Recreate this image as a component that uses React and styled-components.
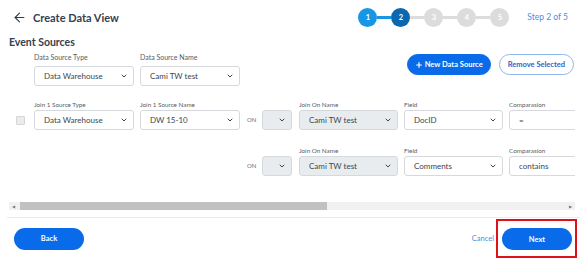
import React from 'react'
import styled, { createGlobalStyle } from 'styled-components'
import { ArrowLeft, ChevronDown, Plus } from 'lucide-react'

const GlobalStyle = createGlobalStyle`
  html, body { margin: 0; padding: 0; background: #fff; }
  body { font-family: Lato, "Noto Sans", sans-serif; }
`

const Page = styled.div`
  width: 588px;
  height: 271px;
  overflow: hidden;
  background: #fff;
  color: #2e3d4c;
`

const Header = styled.div`
  display: flex;
  align-items: center;
  height: 34px;
  padding: 0 20px 0 12px;
`

const Title = styled.h1`
  margin: 0 0 0 6px;
  font-size: 11px;
  font-weight: 700;
  color: #34414f;
`

const Stepper = styled.div`
  margin-left: auto;
  display: flex;
  align-items: center;
`

const Step = styled.div`
  width: 19px;
  height: 19px;
  border-radius: 50%;
  background: ${p => (p.$state === 'done' ? '#1597e5' : p.$state === 'current' ? '#0a67b0' : '#dcdcdc')};
  color: #fff;
  font-size: 7.5px;
  font-weight: 700;
  display: flex;
  align-items: center;
  justify-content: center;
`

const Connector = styled.div`
  width: 14px;
  height: 3px;
  background: ${p => (p.$active ? '#1597e5' : '#dcdcdc')};
`

const StepText = styled.span`
  margin-left: 18px;
  font-size: 8.5px;
  color: #4a8de6;
`

const SectionTitle = styled.h2`
  margin: 1px 0 0 9px;
  font-size: 10.5px;
  line-height: 14px;
  font-weight: 700;
  color: #34414f;
`

const TopRow = styled.div`
  display: flex;
  align-items: flex-start;
  padding: 3px 14px 0 34px;
`

const Actions = styled.div`
  margin-left: auto;
  margin-top: 2px;
  display: flex;
  gap: 8px;
`

const PillButton = styled.button`
  height: 21px;
  padding: 0 ${p => p.$pad || 7}px;
  border-radius: 11px;
  font-family: inherit;
  font-size: 7.5px;
  font-weight: 700;
  display: flex;
  align-items: center;
  gap: 2px;
  cursor: pointer;
  border: 1px solid ${p => (p.$outline ? '#8fb6ee' : '#0a6bea')};
  background: ${p => (p.$outline ? '#fff' : '#0a6bea')};
  color: ${p => (p.$outline ? '#2f62c4' : '#fff')};
`

const ScrollArea = styled.div`
  margin: 14px 13px 0 9px;
  overflow: hidden;
`

const ScrollContent = styled.div`
  width: 1010px;
  display: flex;
  flex-direction: column;
  gap: 16px;
`

const JoinRow = styled.div`
  display: flex;
  align-items: flex-end;
  padding-left: 25px;
  position: relative;
`

const Check = styled.div`
  position: absolute;
  left: 7px;
  bottom: 5px;
  width: 7px;
  height: 7px;
  border: 1px solid #d6d6d6;
  background: #ececec;
  border-radius: 1px;
`

const FieldBox = styled.div`
  width: ${p => p.$w}px;
  margin-right: ${p => (p.$mr === undefined ? 6 : p.$mr)}px;
  display: flex;
  flex-direction: column;
  flex-shrink: 0;
  visibility: ${p => (p.$hidden ? 'hidden' : 'visible')};
`

const Label = styled.label`
  font-size: ${p => p.$size || 6.3}px;
  line-height: 10px;
  height: 10px;
  color: #555d66;
  margin-bottom: ${p => p.$gap || 0}px;
  white-space: nowrap;
`

const SelectBox = styled.div`
  height: 20px;
  box-sizing: border-box;
  border: 1px solid #d5d9de;
  border-radius: 3px;
  background: ${p => (p.$disabled ? '#e9ecef' : '#fff')};
  display: flex;
  align-items: center;
  padding: 0 5px 0 9px;
  font-size: 8px;
  color: #3b4650;
  white-space: nowrap;
  span { flex: 1; overflow: hidden; }
`

const OnText = styled.span`
  width: 15px;
  margin-left: 1px;
  font-size: 6px;
  color: #6a7178;
  align-self: flex-end;
  line-height: 20px;
`

const FakeScrollbar = styled.div`
  margin: 26px 13px 0 9px;
  height: 8px;
  background: #f1f1f1;
  display: flex;
  align-items: center;
  padding: 0 3px;
  font-size: 4px;
  color: #777;
`

const Thumb = styled.div`
  margin-left: 5px;
  width: 307px;
  height: 8px;
  background: #c1c1c1;
`

const Divider = styled.div`
  margin: 7px 8px 0 7px;
  height: 1px;
  background: #e8ecf1;
`

const Footer = styled.div`
  display: flex;
  align-items: center;
  padding: 1px 11px 0 14px;
`

const FooterButton = styled.button`
  width: 70px;
  height: 22px;
  border-radius: 11px;
  border: none;
  background: #0a6bea;
  color: #fff;
  font-family: inherit;
  font-size: 7.5px;
  font-weight: 700;
  cursor: pointer;
`

const CancelLink = styled.span`
  margin-left: auto;
  font-size: 7.5px;
  color: #4a8de6;
`

const Highlight = styled.div`
  margin-left: 2px;
  border: 2px solid #e0101a;
  padding: 7px 3px 6px 4px;
  display: flex;
`

const Field = ({ label, value, w = 100, disabled, hidden, mr, size, gap }) => (
  <FieldBox $w={w} $hidden={hidden} $mr={mr}>
    <Label $size={size} $gap={gap}>{label}</Label>
    <SelectBox $disabled={disabled}>
      <span>{value}</span>
      <ChevronDown size={8} strokeWidth={3} color="#444" />
    </SelectBox>
  </FieldBox>
)

const JoinFields = ({ field, comparison }) => (
  <>
    <OnText>ON</OnText>
    <Field label="" value="" w={30} disabled mr={7} />
    <Field label="Join On Name" value="Cami TW test" w={99} disabled />
    <Field label="Field" value={field} w={99} />
    <Field label="Comparasion" value={comparison} w={100} />
  </>
)

export default function App() {
  const steps = ['done', 'current', 'todo', 'todo', 'todo']
  return (
    <Page>
      <GlobalStyle />
      <Header>
        <ArrowLeft size={15} strokeWidth={1.8} color="#2f3e4e" />
        <Title>Create Data View</Title>
        <Stepper>
          {steps.map((s, i) => (
            <React.Fragment key={i}>
              {i > 0 && <Connector $active={i === 1} />}
              <Step $state={s}>{i + 1}</Step>
            </React.Fragment>
          ))}
          <StepText>Step 2 of 5</StepText>
        </Stepper>
      </Header>

      <SectionTitle>Event Sources</SectionTitle>
      <TopRow>
        <Field label="Data Source Type" value="Data Warehouse" w={100} size={7} gap={4} />
        <Field label="Data Source Name" value="Cami TW test" w={100} size={7} gap={4} />
        <Actions>
          <PillButton><Plus size={8} strokeWidth={3.5} />New Data Source</PillButton>
          <PillButton $outline $pad={8}>Remove Selected</PillButton>
        </Actions>
      </TopRow>

      <ScrollArea>
        <ScrollContent>
          <JoinRow>
            <Check />
            <Field label="Join 1 Source Type" value="Data Warehouse" w={100} />
            <Field label="Join 1 Source Name" value="DW 15-10" w={100} />
            <JoinFields field="DocID" comparison="=" />
          </JoinRow>
          <JoinRow>
            <Field label="" value="" w={100} hidden />
            <Field label="" value="" w={100} hidden />
            <JoinFields field="Comments" comparison="contains" />
          </JoinRow>
        </ScrollContent>
      </ScrollArea>

      <FakeScrollbar>
        <span>◀</span>
        <Thumb />
        <span style={{ marginLeft: 'auto' }}>▶</span>
      </FakeScrollbar>
      <Divider />

      <Footer>
        <FooterButton>Back</FooterButton>
        <CancelLink>Cancel</CancelLink>
        <Highlight>
          <FooterButton>Next</FooterButton>
        </Highlight>
      </Footer>
    </Page>
  )
}
